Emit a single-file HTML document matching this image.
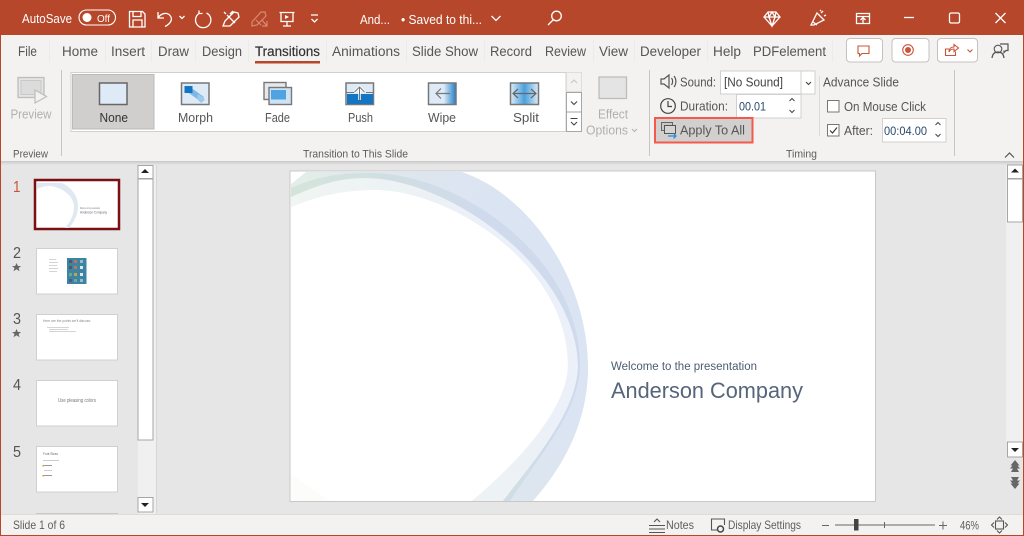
<!DOCTYPE html>
<html><head><meta charset="utf-8"><title>PowerPoint</title>
<style>html,body{margin:0;padding:0;background:#e6e6e6;overflow:hidden}svg{display:block;filter:blur(.3px)}
text{font-family:"Liberation Sans",sans-serif;fill:#575553;font-size:13px}
.w{fill:#fff}.g{fill:#b1b0af}.s{font-size:12.5px}.l{font-size:11px;fill:#5c5c5c}.ic{fill:none;stroke:#fff;stroke-width:1.3}.d{fill:none;stroke:#555;stroke-width:1.2}.t{font-size:13.5px}</style></head>
<body>
<svg width="1024" height="536" viewBox="0 0 1024 536" xmlns="http://www.w3.org/2000/svg">
<defs>
<radialGradient id="o" gradientUnits="userSpaceOnUse" cx="600" cy="290" r="330"><stop offset=".4" stop-color="#dbe4f3"/><stop offset=".62" stop-color="#dde6ef"/><stop offset=".8" stop-color="#dee8ec"/><stop offset="1" stop-color="#e4efe8"/></radialGradient>
<radialGradient id="m" gradientUnits="userSpaceOnUse" cx="600" cy="290" r="330"><stop offset=".4" stop-color="#ecf0f8"/><stop offset=".72" stop-color="#edf2f4"/><stop offset="1" stop-color="#f0f6f2"/></radialGradient>
<radialGradient id="st" gradientUnits="userSpaceOnUse" cx="600" cy="290" r="330"><stop offset=".4" stop-color="#cfdaec"/><stop offset=".72" stop-color="#d0dee3"/><stop offset="1" stop-color="#d5e5da"/></radialGradient>
<linearGradient id="wp" x1="0" x2="1"><stop offset="0" stop-color="#deebf7"/><stop offset=".55" stop-color="#deebf7"/><stop offset="1" stop-color="#1f7fc8"/></linearGradient>
<linearGradient id="sp" x1="0" x2="1"><stop offset="0" stop-color="#deebf7"/><stop offset=".5" stop-color="#4aa0dc"/><stop offset="1" stop-color="#deebf7"/></linearGradient>
<linearGradient id="sh" x1="0" x2="0" y1="0" y2="1"><stop offset="0" stop-color="#c8c8c8"/><stop offset="1" stop-color="#e6e6e6"/></linearGradient>
</defs>
<rect width="1024" height="536" fill="#e6e6e6"/>
<!-- title bar -->
<rect width="1024" height="35" fill="#b7472a"/>
<text class="w" x="22" y="23" textLength="50" lengthAdjust="spacingAndGlyphs">AutoSave</text>
<rect x="79" y="10" width="36.500" height="15" rx="7.500" fill="none" stroke="#fff" stroke-width="1.100"/>
<circle cx="87" cy="17.500" r="4.500" fill="#fff"/>
<text class="w" x="97" y="22" style="font-size:10.500px" textLength="13" lengthAdjust="spacingAndGlyphs">Off</text>
<path class="ic" d="M129.500 11.500h13l2.500 2.500v13h-15.500zM133 11.500v5h8v-5M133 26.500v-6.500h9v6.500"/>
<path class="ic" d="M158 12v6h6M158 18c3-5 9-6 12-2.500 3 3.500 1 8-5 11"/>
<path class="ic" d="M179.500 16l2.500 2.500 2.500-2.500" stroke-width="1"/>
<path class="ic" d="M206.500 13a7.700 7.700 0 1 1-7.500 .5M199 10.500v3h3.500"/>
<path class="ic" d="M223 26l2-5 9-9 4 1 1 4-9 9zM227 15l8 8M233 11l-3 3M224 12l2 2"/>
<path fill="none" stroke="#d88a75" stroke-width="1.200" d="M252 22l9-10 4 0 1 4-9 9-5 1zM256 20l5 5M262 20l5 6m-5 0h5v-5"/>
<path class="ic" d="M279.500 12.500h15M281 12.500v9h12v-9M287 21.500v4M283 26h8"/><path d="M285 15l4 2-4 2z" fill="#fff"/>
<path class="ic" d="M311 15h7M311.500 19l3 3 3-3" stroke-width="1"/>
<text class="w" x="360" y="24" textLength="30" lengthAdjust="spacingAndGlyphs">And...</text>
<text class="w" x="401" y="24" textLength="81" lengthAdjust="spacingAndGlyphs">• Saved to thi...</text>
<path class="ic" d="M491.500 16l4.500 4.500 4.500-4.500"/>
<circle class="ic" cx="556.500" cy="16" r="4.800"/><path class="ic" d="M553 20l-5 5"/>
<path class="ic" d="M768 12h8l4 5-8 9-8-9zM764 17h16M769 17l3 9 3-9M768 12l1 5 3-5 3 5 1-5"/>
<path class="ic" d="M811 25l6-12 7 7-10 5zM813 22l4 3M821 13l2-2M824 16l2-1M820 11l1-1"/>
<path class="ic" d="M856.500 13.500h13v10h-13zM856.500 16.500h13M863 23v-5M860.500 20l2.500-2.500 2.500 2.500"/>
<path class="ic" d="M904 17.500h10"/><rect class="ic" x="949.500" y="13" width="10" height="10" rx="1.500"/><path class="ic" d="M995.500 13l10 10M1005.500 13l-10 10"/>
<!-- tabs + ribbon -->
<rect x="0" y="35" width="1024" height="126" fill="#f3f2f1"/>
<text class="t" x="18" y="56" textLength="19" lengthAdjust="spacingAndGlyphs">File</text>
<text class="t" x="62" y="56" textLength="36" lengthAdjust="spacingAndGlyphs">Home</text>
<text class="t" x="111" y="56" textLength="34" lengthAdjust="spacingAndGlyphs">Insert</text>
<text class="t" x="158" y="56" textLength="31" lengthAdjust="spacingAndGlyphs">Draw</text>
<text class="t" x="202" y="56" textLength="40" lengthAdjust="spacingAndGlyphs">Design</text>
<text class="t" x="255" y="56" textLength="65" lengthAdjust="spacingAndGlyphs" style="fill:#333;stroke:#333;stroke-width:.2">Transitions</text>
<text class="t" x="332" y="56" textLength="68" lengthAdjust="spacingAndGlyphs">Animations</text>
<text class="t" x="412" y="56" textLength="66" lengthAdjust="spacingAndGlyphs">Slide Show</text>
<text class="t" x="490" y="56" textLength="42" lengthAdjust="spacingAndGlyphs">Record</text>
<text class="t" x="545" y="56" textLength="41" lengthAdjust="spacingAndGlyphs">Review</text>
<text class="t" x="599" y="56" textLength="29" lengthAdjust="spacingAndGlyphs">View</text>
<text class="t" x="640" y="56" textLength="61" lengthAdjust="spacingAndGlyphs">Developer</text>
<text class="t" x="713" y="56" textLength="28" lengthAdjust="spacingAndGlyphs">Help</text>
<text class="t" x="753" y="56" textLength="73" lengthAdjust="spacingAndGlyphs">PDFelement</text>
<path stroke="#ecebea" d="M49.500 40v22M105.500 40v22M151.500 40v22M195.500 40v22M248.500 40v22M326.500 40v22M406.500 40v22M484.500 40v22M593.500 40v22M634.500 40v22M707.500 40v22M832.500 40v22" fill="none"/>
<rect x="255" y="61" width="65" height="2.500" fill="#b7472a"/>
<g fill="#fff" stroke="#c4c2c0"><rect x="846.500" y="38.500" width="36" height="23.500" rx="3.500"/><rect x="892" y="38.500" width="37" height="23.500" rx="3.500"/><rect x="937.500" y="38.500" width="40" height="23.500" rx="3.500"/></g>
<path fill="none" stroke="#c8553a" stroke-width="1.100" d="M858 46h11v7.500h-7l-2.500 2.500v-2.500H858z"/>
<circle cx="908" cy="50" r="5.300" fill="none" stroke="#c8553a" stroke-width="1.100"/><circle cx="908" cy="50" r="3" fill="#c8553a"/>
<path fill="none" stroke="#c8553a" stroke-width="1.100" d="M949 49h-3.500v6.500h10v-4M949 52c0-4 3-5 5-5v-2.500l4.500 3.500-4.500 3.500v-2.500c-2 0-4 .5-5 3M967.500 49.500l2.500 2.500 2.500-2.500"/>
<circle cx="998" cy="49" r="3.800" fill="none" stroke="#555" stroke-width="1.100"/><path class="d" d="M992 58c.5-4.500 3-6 6-6s5.500 1.500 6 6M1000 44h8v6.500h-2l-2 2v-2"/>
<!-- Preview group -->
<rect x="18" y="77.500" width="26" height="20" fill="#e4e4e4" stroke="#bdbdbd" stroke-width="1.300"/><rect x="21" y="80.500" width="20" height="14" fill="#dcdcdc" stroke="#c9c9c9"/>
<path d="M35 90l11.500 6.500L35 103z" fill="#f3f2f1" stroke="#bdbdbd" stroke-width="1.200"/>
<text class="g s" x="10.500" y="118.500" textLength="41" lengthAdjust="spacingAndGlyphs">Preview</text>
<text class="l" x="13" y="157.500" textLength="35" lengthAdjust="spacingAndGlyphs">Preview</text>
<path stroke="#c8c6c4" d="M61.500 70v86M649.500 70v86M954.500 70v86"/>
<!-- gallery -->
<rect x="71" y="72.500" width="495" height="59" fill="#fff" stroke="#d2d0ce"/>
<rect x="72.500" y="74.500" width="81.500" height="54.500" fill="#d1cfcd" stroke="#bbb"/>
<rect x="99.500" y="83" width="27.500" height="21.500" fill="#deebf7" stroke="#666" stroke-width="1.500"/>
<text class="s" x="99.500" y="122" textLength="28.500" lengthAdjust="spacingAndGlyphs" style="fill:#333">None</text>
<rect x="181.500" y="83" width="27.500" height="21.500" fill="#deebf7" stroke="#777" stroke-width="1.500"/>
<path d="M190 87l14 10-4 4-14-10z" fill="#7cb8e6"/><rect x="184.500" y="86" width="8" height="7" fill="#1276c4"/><path d="M198 94l5 3 2 3-4 3-4-4z" fill="#9cc9ec"/>
<text class="s" x="178" y="122" textLength="35" lengthAdjust="spacingAndGlyphs">Morph</text>
<rect x="264" y="82.500" width="22" height="17" fill="#e5e9ee" stroke="#777" stroke-width="1.400"/>
<rect x="269" y="87.500" width="22.500" height="17" fill="#cfe2f3" stroke="#777" stroke-width="1.400"/><rect x="271" y="90" width="15" height="9.500" fill="#4fa3e0"/>
<text class="s" x="265" y="122" textLength="25" lengthAdjust="spacingAndGlyphs">Fade</text>
<rect x="346" y="83" width="27.500" height="21.500" fill="#deebf7" stroke="#777" stroke-width="1.500"/><rect x="347" y="94" width="26" height="10" fill="#1276c4"/>
<path d="M346 92.500h8M366 92.500h7" stroke="#777"/><path d="M359.500 100v-13m-5 5l5-5 5 5" fill="none" stroke="#fff" stroke-width="2.500"/><path d="M359.500 100v-13m-5 5l5-5 5 5" fill="none" stroke="#777" stroke-width="1"/>
<text class="s" x="348" y="122" textLength="25" lengthAdjust="spacingAndGlyphs">Push</text>
<rect x="428.500" y="83" width="27.500" height="21.500" fill="url(#wp)" stroke="#777" stroke-width="1.500"/><path d="M450 93.500h-14m5-5l-5 5 5 5" fill="none" stroke="#777" stroke-width="1.200"/>
<text class="s" x="428" y="122" textLength="28" lengthAdjust="spacingAndGlyphs">Wipe</text>
<rect x="510.500" y="83" width="28" height="21.500" fill="url(#sp)" stroke="#777" stroke-width="1.500"/><path d="M513 93.500h23m-18-4.500l-5 4.500 5 4.500M531 89l5 4.500-5 4.500" fill="none" stroke="#666" stroke-width="1.200"/>
<text class="s" x="513" y="122" textLength="26" lengthAdjust="spacingAndGlyphs">Split</text>
<rect x="566.500" y="72.500" width="15" height="19" fill="#f3f2f1" stroke="#dedddc"/><path d="M571 83l3-3 3 3" fill="none" stroke="#c4c4c4"/>
<rect x="566.500" y="92.500" width="15" height="19.500" fill="#fff" stroke="#a6a6a6"/><path d="M571 101.500l3 3 3-3" fill="none" stroke="#444" stroke-width="1.100"/>
<rect x="566.500" y="112" width="15" height="19.500" fill="#fff" stroke="#a6a6a6"/><path d="M570.500 118.500h7M571 122l3 3 3-3" fill="none" stroke="#444" stroke-width="1.100"/>
<rect x="599" y="77" width="27.500" height="21.500" fill="#e4e4e4" stroke="#bdbdbd" stroke-width="1.300"/>
<text class="g s" x="598" y="118.500" textLength="30" lengthAdjust="spacingAndGlyphs">Effect</text>
<text class="g s" x="586" y="134.500" textLength="42" lengthAdjust="spacingAndGlyphs">Options</text>
<path d="M632 129l2.500 2.500 2.500-2.500" fill="none" stroke="#b1b0af"/>
<text class="l" x="303" y="157.500" textLength="105" lengthAdjust="spacingAndGlyphs">Transition to This Slide</text>
<!-- timing -->
<path class="d" d="M661 79h3l5-4v13l-5-4h-3zM671.500 78c1.500 2 1.500 5 0 7M674 76c2.500 3 2.500 8 0 11"/>
<text class="s" x="680" y="86.500" textLength="36" lengthAdjust="spacingAndGlyphs">Sound:</text>
<rect x="720.500" y="71" width="80.500" height="23" fill="#fff" stroke="#d2d0ce"/><rect x="801" y="71" width="14" height="23" fill="#fff" stroke="#d2d0ce"/>
<text class="s" x="724" y="86.500" textLength="59" lengthAdjust="spacingAndGlyphs" style="fill:#444">[No Sound]</text>
<path d="M806 82l2.500 2.500 2.500-2.500" fill="none" stroke="#444" stroke-width="1.100"/>
<circle cx="668" cy="106" r="7.300" fill="none" stroke="#444" stroke-width="1.200"/><path d="M668 101v5.500h4" fill="none" stroke="#444" stroke-width="1.200"/>
<text class="s" x="680" y="110.500" textLength="48" lengthAdjust="spacingAndGlyphs">Duration:</text>
<rect x="736.500" y="94.500" width="64.500" height="23.500" fill="#fff" stroke="#d2d0ce"/>
<text x="739" y="110.500" textLength="27" lengthAdjust="spacingAndGlyphs" style="font-size:12px;fill:#2b4a6e">00.01</text>
<path d="M789.500 101l2.500-2.500 2.500 2.500M789.500 110l2.500 2.500 2.500-2.500" fill="none" stroke="#444"/>
<rect x="655" y="118" width="97.500" height="24.500" fill="#d2d0cf" stroke="#f4594b" stroke-width="2"/>
<rect x="661.500" y="122.500" width="11" height="8" fill="#c8c8c8" stroke="#666"/><rect x="664.500" y="125.500" width="11" height="8" fill="#d4d4d4" stroke="#555"/>
<path d="M668 136h8m-2.500-2.500l2.500 2.500-2.500 2.500" fill="none" stroke="#2b88d8" stroke-width="1.200"/>
<text class="s" x="680" y="134.500" textLength="65" lengthAdjust="spacingAndGlyphs">Apply To All</text>
<path stroke="#dcdbda" d="M819.500 76v60"/>
<text class="s" x="823" y="86.500" textLength="76" lengthAdjust="spacingAndGlyphs">Advance Slide</text>
<rect x="827.500" y="100.500" width="11.500" height="11.500" fill="#fff" stroke="#777"/>
<text class="s" x="844" y="111" textLength="82" lengthAdjust="spacingAndGlyphs">On Mouse Click</text>
<rect x="827.500" y="124.500" width="11.500" height="11.500" fill="#fff" stroke="#777"/><path d="M830 130.500l2.500 2.500 4.500-5.500" fill="none" stroke="#333" stroke-width="1.100"/>
<text class="s" x="844" y="135" textLength="29" lengthAdjust="spacingAndGlyphs">After:</text>
<rect x="882.500" y="118.500" width="63.500" height="23.500" fill="#fff" stroke="#d2d0ce"/>
<text x="884" y="135" textLength="43" lengthAdjust="spacingAndGlyphs" style="font-size:12px;fill:#2b4a6e">00:04.00</text>
<path d="M935.500 125l2.500-2.500 2.500 2.500M935.500 134l2.500 2.500 2.500-2.500" fill="none" stroke="#444"/>
<text class="l" x="786" y="157.500" textLength="31" lengthAdjust="spacingAndGlyphs">Timing</text>
<path d="M1005 157.500l4.500-4.500 4.500 4.500" fill="none" stroke="#555" stroke-width="1.200"/>
<rect x="0" y="161" width="1024" height="4" fill="url(#sh)"/>
<!-- left panel -->
<rect x="138" y="165" width="18" height="349" fill="#f0f0f0"/>
<path stroke="#d6d6d6" d="M156.500 165v349"/>
<g fill="#fff" stroke="#a6a6a6"><rect x="138" y="165.500" width="15" height="13"/><rect x="138" y="179" width="15" height="261"/><rect x="138" y="497.500" width="15" height="14.500"/></g>
<path d="M141 173h8l-4-4zM141 503h8l-4 4z" fill="#222"/>
<text x="13" y="192" textLength="7.500" lengthAdjust="spacingAndGlyphs" style="font-size:16px;fill:#c8553a">1</text>
<text x="13" y="258" textLength="8" lengthAdjust="spacingAndGlyphs" style="font-size:16px">2</text>
<text x="13" y="324" textLength="8" lengthAdjust="spacingAndGlyphs" style="font-size:16px">3</text>
<text x="13" y="390" textLength="8" lengthAdjust="spacingAndGlyphs" style="font-size:16px">4</text>
<text x="13" y="457" textLength="8" lengthAdjust="spacingAndGlyphs" style="font-size:16px">5</text>
<path d="M16.500 263l1.400 3h3.200l-2.500 2 1 3.200-3.100-1.900-3 1.900 1-3.200-2.500-2h3.200z" fill="#666"/>
<path d="M16.500 329l1.400 3h3.200l-2.500 2 1 3.200-3.100-1.900-3 1.900 1-3.200-2.500-2h3.200z" fill="#666"/>
<!-- thumbs -->
<rect x="35" y="180" width="84" height="49" fill="#fff" stroke="#7a0f14" stroke-width="2.500"/>
<path d="M37 183H62C72 188 78 196 78 206C78 215 74 222 69 228H65C71 221 74 214 74 206C73 194 60 187 50 186C45 186 41 187 37 189Z" fill="#e0e8f1"/>
<text x="80" y="209" textLength="20" lengthAdjust="spacingAndGlyphs" style="font-size:3px;fill:#777">Welcome to the presentation</text>
<text x="80" y="213.500" textLength="27" lengthAdjust="spacingAndGlyphs" style="font-size:4px;fill:#667">Anderson Company</text>
<g fill="#fff" stroke="#d0d0d0"><rect x="36.500" y="248.500" width="81" height="45.500"/><rect x="36.500" y="314.500" width="81" height="45.500"/><rect x="36.500" y="380.500" width="81" height="45.500"/><rect x="36.500" y="446.500" width="81" height="45.500"/></g>
<rect x="36" y="513" width="82" height="1" fill="#c8c8c8"/>
<rect x="67" y="258" width="19.500" height="26" fill="#3d84a3"/>
<g fill="#9dbccb"><rect x="69" y="260" width="3" height="3" fill="#556"/><rect x="74" y="260" width="3" height="3" fill="#b57a5a"/><rect x="80" y="260" width="3" height="3"/><rect x="69" y="266" width="3" height="3" fill="#556"/><rect x="74" y="266" width="3" height="3" fill="#b57a5a"/><rect x="80" y="266" width="3" height="3" fill="#dfe8ee"/><rect x="69" y="273" width="3" height="3" fill="#6a8"/><rect x="74" y="273" width="3" height="3" fill="#c9a050"/><rect x="80" y="273" width="3" height="3" fill="#dfe8ee"/><rect x="69" y="279" width="3" height="3" fill="#558"/><rect x="74" y="279" width="3" height="3" fill="#6a9"/><rect x="80" y="279" width="3" height="3"/></g>
<path stroke="#d4d4d4" d="M49 259.500h7M49 262.500h9M49 265.500h8M49 268.500h9M49 271.500h8"/>
<text x="43" y="322" textLength="48" lengthAdjust="spacingAndGlyphs" style="font-size:4px;fill:#888">Here are the points we'll discuss:</text>
<path stroke="#d4d4d4" d="M47 327.500h22M49 329.500h19M49 331.500h27"/>
<text x="58" y="402" textLength="38" lengthAdjust="spacingAndGlyphs" style="font-size:5px;fill:#777">Use pleasing colors</text>
<text x="43" y="455" textLength="15" lengthAdjust="spacingAndGlyphs" style="font-size:4px;fill:#666">Font Sizes</text>
<path stroke="#ccc" d="M43 460.500h16M44 470.500h8"/><path stroke="#999" d="M43 465.500h9M43 475.500h9"/><rect x="42.500" y="465" width="1.500" height="1.500" fill="#d8a020"/><rect x="42.500" y="475" width="1.500" height="1.500" fill="#d8a020"/>
<!-- slide -->
<rect x="290" y="171" width="585.500" height="330.500" fill="#fff" stroke="#c8c8c8"/>
<path d="M291 184L306 172H462C530 195 588 280 588 368C588 420 565 465 533 501H472C515 465 568 410 568 365C568 262 445 188 373 190C345 190 320 195 291 207Z" fill="url(#o)"/>
<path d="M291 197C320 184 340 178 365 178C450 178 576 270 578 365C578 410 535 460 503 501H472C515 465 568 410 568 365C568 262 445 188 373 190C345 190 320 195 291 207Z" fill="url(#m)"/>
<path d="M291 188C315 177 340 173 365 173C455 170 580 255 580 365C580 410 540 455 510 501H503C535 460 578 410 578 365C576 270 450 178 365 178C340 178 320 184 291 197Z" fill="url(#st)"/>
<path d="M291 474L330 501H291Z" fill="#fcfcfa"/>
<text x="611" y="370" textLength="146" lengthAdjust="spacingAndGlyphs" style="font-size:11.500px;fill:#4d5c72">Welcome to the presentation</text>
<text x="611" y="398" textLength="192" lengthAdjust="spacingAndGlyphs" style="font-size:22px;fill:#56657a">Anderson Company</text>
<!-- right scroll -->
<rect x="1006" y="165" width="17" height="277" fill="#f0f0f0"/>
<g fill="#fff" stroke="#a6a6a6"><rect x="1007.500" y="165" width="15" height="13.500"/><rect x="1007.500" y="179" width="15" height="43"/><rect x="1007.500" y="442" width="15" height="15"/></g>
<path d="M1011 172.500h8l-4-4zM1011 448h8l-4 4z" fill="#222"/>
<path d="M1015 460l-4.500 5.500h2l-2.500 3h3l-2 3.500h8l-2-3.500h3l-2.500-3h2z" fill="#666"/>
<path d="M1015 489l-4.500-5.500h2l-2.500-3h3l-2-3.500h8l-2 3.500h3l-2.500 3h2z" fill="#666"/>
<!-- status -->
<rect x="0" y="514" width="1024" height="22" fill="#f3f2f1"/><path stroke="#dcdcdc" d="M0 514.500h1024"/>
<text x="13" y="529" textLength="52" lengthAdjust="spacingAndGlyphs" style="font-size:12px;fill:#605e5c">Slide 1 of 6</text>
<path d="M649 525.500h16M649 529h16M649 532.500h16M654 522l3-3 3 3" fill="none" stroke="#555" stroke-width="1.100"/>
<text x="666" y="529" textLength="28" lengthAdjust="spacingAndGlyphs" style="font-size:12px;fill:#605e5c">Notes</text>
<path d="M717 530h-5.500v-11h13v6" fill="none" stroke="#555" stroke-width="1.100"/><circle cx="720.500" cy="529" r="3" fill="none" stroke="#444" stroke-width="1.500"/>
<text x="728" y="529" textLength="73" lengthAdjust="spacingAndGlyphs" style="font-size:12px;fill:#605e5c">Display Settings</text>
<path stroke="#666" d="M822 525.500h7M835 525h100M884.500 522v6M939 525.500h8M943 521.500v8"/>
<rect x="854" y="519" width="4.500" height="11.500" fill="#444"/>
<text x="960" y="529.500" textLength="19" lengthAdjust="spacingAndGlyphs" style="font-size:12px;fill:#605e5c">46%</text>
<rect x="995.500" y="521" width="8" height="8" fill="none" stroke="#555" stroke-width="1.100"/><path d="M997 519.500l2.500-2.500 2.500 2.500M997 530.500l2.500 2.500 2.500-2.500M994 522.500l-2.500 2.500 2.500 2.500M1005 522.500l2.500 2.500-2.500 2.500" fill="none" stroke="#555" stroke-width="1.100"/>
<!-- window border -->
<rect x="0" y="35" width="1" height="501" fill="#b7472a"/><rect x="1023" y="35" width="1" height="501" fill="#b7472a"/><rect x="0" y="535" width="1024" height="1" fill="#b7472a"/>
</svg>
</body></html>
